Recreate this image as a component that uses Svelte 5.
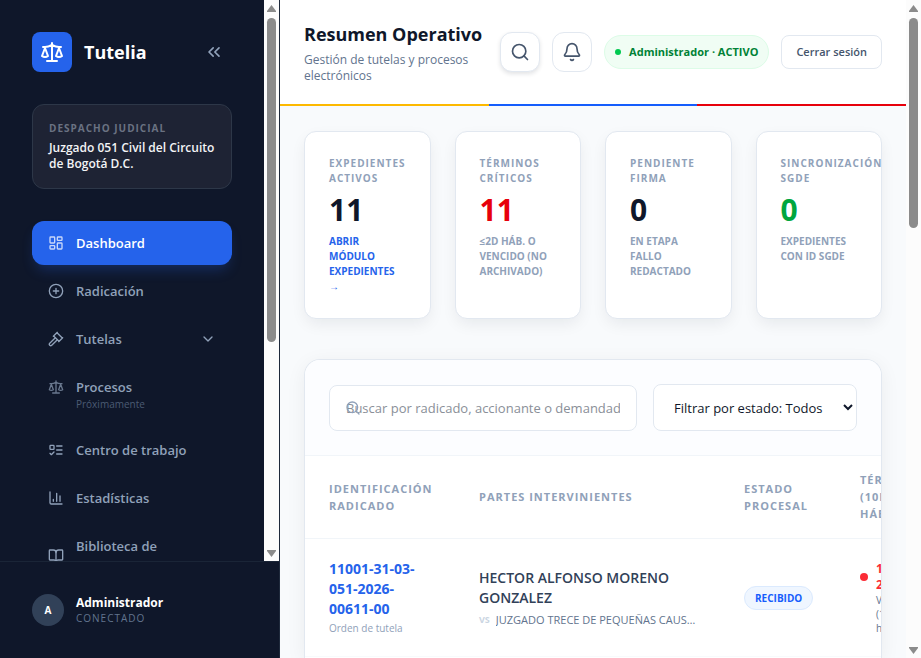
<script>
  let query = $state('')
  let status = $state('todos')

  const nav = [
    { label: 'Dashboard', icon: 'grid', active: true },
    { label: 'Radicación', icon: 'plus' },
    { label: 'Tutelas', icon: 'gavel', expandable: true },
    { label: 'Procesos', icon: 'scale', note: 'Próximamente' },
    { label: 'Centro de trabajo', icon: 'todo' },
    { label: 'Estadísticas', icon: 'chart' },
    { label: 'Biblioteca de', icon: 'book', tall: true }
  ]

  const stats = [
    { label: 'Expedientes activos', value: 11, link: 'Abrir módulo expedientes →' },
    { label: 'Términos críticos', value: 11, tone: 'red', note: '≤2d háb. o vencido (no archivado)' },
    { label: 'Pendiente firma', value: 0, note: 'En etapa fallo redactado' },
    { label: 'Sincronización SGDE', value: 0, tone: 'green', note: 'Expedientes con ID SGDE' }
  ]

  const cases = [
    {
      id: '11001-31-03-051-2026-00611-00',
      kind: 'Orden de tutela',
      claimant: 'HECTOR ALFONSO MORENO GONZALEZ',
      defendant: 'JUZGADO TRECE DE PEQUEÑAS CAUSAS',
      status: 'RECIBIDO',
      due: ['17 mar', '2026'],
      dueNote: ['Vencido', '(10 días', 'háb.)']
    }
  ]
</script>

{#snippet icon(name, size = 16)}
  <svg
    class="icon"
    width={size}
    height={size}
    viewBox="0 0 24 24"
    fill="none"
    stroke="currentColor"
    stroke-width="2"
    stroke-linecap="round"
    stroke-linejoin="round"
    aria-hidden="true"
  >
    {#if name === 'scale'}
      <path d="m16 16 3-8 3 8c-.87.65-1.92 1-3 1s-2.13-.35-3-1Z" />
      <path d="m2 16 3-8 3 8c-.87.65-1.92 1-3 1s-2.13-.35-3-1Z" />
      <path d="M7 21h10M12 3v18M3 7h2c2 0 5-1 7-2 2 1 5 2 7 2h2" />
    {:else if name === 'collapse'}
      <path d="m11 17-5-5 5-5M18 17l-5-5 5-5" />
    {:else if name === 'grid'}
      <rect width="7" height="9" x="3" y="3" rx="1" />
      <rect width="7" height="5" x="14" y="3" rx="1" />
      <rect width="7" height="9" x="14" y="12" rx="1" />
      <rect width="7" height="5" x="3" y="16" rx="1" />
    {:else if name === 'plus'}
      <circle cx="12" cy="12" r="10" />
      <path d="M8 12h8M12 8v8" />
    {:else if name === 'gavel'}
      <path d="m14 13-8.381 8.38a1 1 0 0 1-3.001-3l8.384-8.381" />
      <path d="m16 16 6-6M21.5 10.5l-8-8M8 8l6-6M8.5 7.5l8 8" />
    {:else if name === 'todo'}
      <rect x="3" y="5" width="6" height="6" rx="1" />
      <path d="m3 17 2 2 4-4M13 6h8M13 12h8M13 18h8" />
    {:else if name === 'chart'}
      <path d="M3 3v16a2 2 0 0 0 2 2h16M18 17V9M13 17V5M8 17v-3" />
    {:else if name === 'book'}
      <path d="M12 7v14" />
      <path
        d="M3 18a1 1 0 0 1-1-1V4a1 1 0 0 1 1-1h5a4 4 0 0 1 4 4 4 4 0 0 1 4-4h5a1 1 0 0 1 1 1v13a1 1 0 0 1-1 1h-6a3 3 0 0 0-3 3 3 3 0 0 0-3-3z"
      />
    {:else if name === 'chevron'}
      <path d="m6 9 6 6 6-6" />
    {:else if name === 'search'}
      <circle cx="11" cy="11" r="8" />
      <path d="m21 21-4.3-4.3" />
    {:else if name === 'bell'}
      <path d="M10.268 21a2 2 0 0 0 3.464 0" />
      <path
        d="M3.262 15.326A1 1 0 0 0 4 17h16a1 1 0 0 0 .74-1.673C19.41 13.956 18 12.499 18 8A6 6 0 0 0 6 8c0 4.499-1.411 5.956-2.738 7.326"
      />
    {/if}
  </svg>
{/snippet}

{#snippet scrollbar(thumb)}
  <div class="scrollbar" aria-hidden="true">
    <svg width="9" height="7" viewBox="0 0 9 7"><path d="M4.5 0 9 6v1H0V6z" /></svg>
    <div class="track"><div class="thumb" style="height: {thumb}%"></div></div>
    <svg width="9" height="7" viewBox="0 0 9 7"><path d="M4.5 7 9 1V0H0v1z" /></svg>
  </div>
{/snippet}

<div class="app">
  <aside class="sidebar">
    <div class="sidebar-scroll">
      <div class="sidebar-body">
        <div class="brand">
          <span class="logo">{@render icon('scale', 24)}</span>
          <span class="brand-name">Tutelia</span>
          <button class="collapse" aria-label="Contraer menú">{@render icon('collapse', 20)}</button>
        </div>

        <section class="office">
          <p class="office-label">Despacho judicial</p>
          <p class="office-name">Juzgado 051 Civil del Circuito de Bogotá D.C.</p>
        </section>

        <nav>
          {#each nav as item}
            <a href="#{item.icon}" class="nav-item" class:active={item.active} class:muted={item.note}>
              {@render icon(item.icon)}
              <span class="nav-label" class:tall={item.tall}>
                {item.label}
                {#if item.note}<small>{item.note}</small>{/if}
              </span>
              {#if item.expandable}{@render icon('chevron')}{/if}
            </a>
          {/each}
        </nav>
      </div>
      {@render scrollbar(61.6)}
    </div>

    <footer class="user">
      <span class="avatar">A</span>
      <div>
        <p class="user-name">Administrador</p>
        <p class="user-state">CONECTADO</p>
      </div>
    </footer>
  </aside>

  <div class="page">
    <header class="topbar">
      <div class="heading">
        <h1>Resumen Operativo</h1>
        <p>Gestión de tutelas y procesos electrónicos</p>
      </div>
      <button class="square raised" aria-label="Buscar">{@render icon('search', 20)}</button>
      <button class="square" aria-label="Notificaciones">{@render icon('bell', 20)}</button>
      <span class="session"><i class="dot"></i>Administrador · ACTIVO</span>
      <button class="logout">Cerrar sesión</button>
    </header>
    <div class="stripe"><i></i><i></i><i></i></div>

    <main>
      <section class="stats">
        {#each stats as stat}
          <article class="stat">
            <h2>{stat.label}</h2>
            <p class="value {stat.tone ?? ''}">{stat.value}</p>
            {#if stat.link}
              <a class="note" href="#expedientes">{stat.link}</a>
            {:else}
              <p class="note">{stat.note}</p>
            {/if}
          </article>
        {/each}
      </section>

      <section class="panel">
        <div class="filters">
          <div class="search">
            {@render icon('search')}
            <input
              type="text"
              aria-label="Buscar expedientes"
              placeholder="Buscar por radicado, accionante o demandado..."
              bind:value={query}
            />
          </div>
          <select aria-label="Filtrar por estado" bind:value={status}>
            <option value="todos">Filtrar por estado: Todos</option>
            <option value="recibido">Recibido</option>
          </select>
        </div>

        <table>
          <colgroup>
            <col class="col-id" />
            <col class="col-parties" />
            <col class="col-status" />
            <col class="col-due" />
          </colgroup>
          <thead>
            <tr>
              <th>Identificación radicado</th>
              <th>Partes intervinientes</th>
              <th>Estado procesal</th>
              <th>Término<br />(10D<br />hábiles)</th>
            </tr>
          </thead>
          <tbody>
            {#each cases as row}
              <tr>
                <td>
                  <a class="case-id" href="#{row.id}">{row.id}</a>
                  <p class="case-kind">{row.kind}</p>
                </td>
                <td>
                  <p class="claimant">{row.claimant}</p>
                  <p class="defendant"><b>VS</b><span>{row.defendant}</span></p>
                </td>
                <td><span class="badge">{row.status}</span></td>
                <td>
                  <div class="due">
                    <i class="dot"></i>
                    <span>{#each row.due as line}{line}<br />{/each}</span>
                  </div>
                  <p class="due-note">{#each row.dueNote as line}{line}<br />{/each}</p>
                </td>
              </tr>
            {/each}
          </tbody>
        </table>
      </section>
    </main>
  </div>

  {@render scrollbar(33.7)}
</div>

<style>
  :global(body) {
    margin: 0;
  }

  .app,
  .app * {
    box-sizing: border-box;
  }

  .app {
    display: flex;
    height: 100vh;
    overflow: hidden;
    background: #f8fafc;
    color: #0f172a;
    font-family: 'Open Sans', 'Noto Sans', sans-serif;
    font-size: 13px;
    line-height: 20px;
  }

  p,
  h1,
  h2 {
    margin: 0;
  }

  a {
    text-decoration: none;
  }

  button,
  input,
  select {
    font: inherit;
    color: inherit;
  }

  button {
    padding: 0;
    border: 0;
    background: none;
    cursor: pointer;
  }

  .icon {
    display: block;
    flex: none;
  }

  .dot {
    flex: none;
    width: 6px;
    height: 6px;
    border-radius: 50%;
    background: #00c950;
  }

  /* scrollbars */
  .scrollbar {
    flex: none;
    display: flex;
    flex-direction: column;
    align-items: center;
    gap: 6px;
    width: 15px;
    padding: 5px 0 4px;
    background: #fcfcfc;
    fill: #8b8b8b;
  }

  .track {
    flex: 1;
    width: 9px;
  }

  .thumb {
    border-radius: 5px;
    background: #8b8b8b;
  }

  /* sidebar */
  .sidebar {
    flex: none;
    display: flex;
    flex-direction: column;
    width: 280px;
    border-right: 1px solid #1e293b;
    background: #0f172a;
    color: #90a1b9;
  }

  .sidebar-scroll {
    flex: 1;
    display: flex;
    min-height: 0;
    overflow: hidden;
  }

  .sidebar-body {
    flex: 1;
    display: flex;
    flex-direction: column;
    gap: 32px;
    min-width: 0;
    padding: 32px;
  }

  .brand {
    display: flex;
    align-items: center;
    gap: 12px;
  }

  .logo {
    display: grid;
    place-items: center;
    width: 40px;
    height: 40px;
    border-radius: 8px;
    background: #2563eb;
    color: #fff;
  }

  .brand-name {
    flex: 1;
    color: #fff;
    font-size: 18px;
    font-weight: 700;
  }

  .collapse {
    display: grid;
    place-items: center;
    width: 36px;
    height: 36px;
  }

  .office {
    padding: 16px;
    border: 1px solid #2d3748;
    border-radius: 12px;
    background: #1e2334;
  }

  .office-label {
    margin-bottom: 4px;
    color: #6a7282;
    font-size: 10px;
    font-weight: 700;
    line-height: 15px;
    letter-spacing: 1px;
    text-transform: uppercase;
  }

  .office-name {
    color: #f3f4f6;
    font-size: 12px;
    font-weight: 600;
    line-height: 16px;
  }

  nav {
    display: flex;
    flex-direction: column;
    gap: 4px;
  }

  .nav-item {
    display: flex;
    align-items: center;
    gap: 12px;
    padding: 12px 16px;
    border-radius: 12px;
    color: inherit;
    font-weight: 600;
  }

  .nav-item.active {
    background: #2563eb;
    color: #fff;
    box-shadow: 0 8px 14px -4px rgba(37, 99, 235, 0.3);
  }

  .nav-item.active .icon {
    color: #c9d8fa;
  }

  .nav-item.muted {
    align-items: flex-start;
  }

  .nav-item.muted .icon {
    margin-top: 2px;
    opacity: 0.7;
  }

  .nav-label {
    flex: 1;
  }

  .nav-label.tall {
    min-height: 40px;
  }

  .nav-label small {
    display: block;
    color: #4b5b73;
    font-size: 10px;
    font-weight: 500;
    line-height: 15px;
  }

  .user {
    display: flex;
    align-items: center;
    gap: 12px;
    padding: 32px;
    border-top: 1px solid #1a2537;
  }

  .avatar {
    display: grid;
    place-items: center;
    width: 32px;
    height: 32px;
    border-radius: 50%;
    background: #314158;
    color: #fff;
    font-size: 10px;
    font-weight: 700;
  }

  .user-name {
    color: #fff;
    font-size: 12px;
    font-weight: 700;
    line-height: 16px;
  }

  .user-state {
    color: #62748e;
    font-size: 10px;
    line-height: 15px;
    letter-spacing: 1px;
  }

  /* page */
  .page {
    flex: 1;
    display: flex;
    flex-direction: column;
    min-width: 0;
  }

  .topbar {
    display: flex;
    align-items: center;
    gap: 12px;
    padding: 20px 24px;
    background: #fff;
  }

  .heading {
    flex: 1;
  }

  .heading h1 {
    margin-bottom: 4px;
    font-size: 18px;
    font-weight: 700;
    line-height: 28px;
    white-space: nowrap;
  }

  .heading p {
    color: #62748e;
    font-size: 12px;
    font-weight: 500;
    line-height: 16px;
  }

  .square {
    flex: none;
    display: grid;
    place-items: center;
    width: 40px;
    height: 40px;
    border: 1px solid #e2e8f0;
    border-radius: 12px;
    background: #fff;
    color: #45556c;
  }

  .square.raised {
    box-shadow: 0 2px 4px rgba(15, 23, 42, 0.12);
  }

  .session {
    flex: none;
    display: flex;
    align-items: center;
    gap: 8px;
    padding: 8px 10px;
    border: 1px solid #dcfce7;
    border-radius: 20px;
    background: #f0fdf4;
    color: #008236;
    font-size: 11px;
    font-weight: 700;
    line-height: 16px;
  }

  .logout {
    flex: none;
    padding: 8px 14px;
    border: 1px solid #e2e8f0;
    border-radius: 8px;
    background: #fff;
    color: #45556c;
    font-size: 11px;
    font-weight: 600;
    line-height: 16px;
  }

  .stripe {
    flex: none;
    display: flex;
    height: 2px;
  }

  .stripe i {
    flex: 1;
    background: #fdb900;
  }

  .stripe i:nth-child(2) {
    background: #155dfc;
  }

  .stripe i:nth-child(3) {
    background: #e7000b;
  }

  main {
    flex: 1;
    display: flex;
    flex-direction: column;
    gap: 40px;
    min-height: 0;
    padding: 25px 24px 0;
  }

  .stats {
    display: grid;
    grid-template-columns: repeat(4, minmax(0, 1fr));
    gap: 24px;
  }

  .stat {
    padding: 24px;
    border: 1px solid #e2e8f0;
    border-radius: 12px;
    background: #fff;
    box-shadow: 0 6px 16px -2px rgba(15, 23, 42, 0.08);
  }

  .stat h2,
  .note {
    color: #90a1b9;
    font-size: 10px;
    font-weight: 700;
    line-height: 15px;
    letter-spacing: 1px;
    text-transform: uppercase;
  }

  .note {
    display: block;
    letter-spacing: 0;
  }

  a.note {
    color: #2563eb;
  }

  .value {
    margin: 8px 0;
    font-size: 30px;
    font-weight: 700;
    line-height: 32px;
  }

  .value.red {
    color: #e7000b;
  }

  .value.green {
    color: #00a63e;
  }

  .panel {
    flex: 1 0 auto;
    overflow: hidden;
    border: 1px solid #e2e8f0;
    border-bottom: 0;
    border-radius: 16px 16px 0 0;
    background: #fff;
    box-shadow: 0 4px 20px rgba(15, 23, 42, 0.06);
  }

  .filters {
    display: flex;
    align-items: flex-end;
    gap: 16px;
    padding: 24px;
    border-bottom: 1px solid #f1f5f9;
    background: #fcfdff;
  }

  .search {
    position: relative;
    flex: 1;
  }

  .search .icon {
    position: absolute;
    top: 15px;
    left: 16px;
    color: #90a1b9;
  }

  .search input,
  select {
    display: block;
    width: 100%;
    height: 46px;
    padding: 0 16px;
    border: 1px solid #e2e8f0;
    border-radius: 8px;
    background: #fff;
  }

  .search input::placeholder {
    color: #8a8f98;
  }

  .filters select {
    flex: none;
    width: 204px;
    height: 47px;
    padding: 0 0 0 16px;
  }

  table {
    width: 900px;
    table-layout: fixed;
    border-collapse: collapse;
  }

  .col-id {
    width: 150px;
  }

  .col-parties {
    width: 265px;
  }

  .col-status {
    width: 116px;
  }

  th {
    padding: 15px 0 16px 24px;
    border-bottom: 1px solid #f1f5f9;
    color: #90a1b9;
    font-size: 11px;
    font-weight: 700;
    line-height: 17px;
    letter-spacing: 1px;
    text-align: left;
    text-transform: uppercase;
  }

  td {
    padding: 20px 24px;
    border-bottom: 1px solid #f8fafc;
  }

  .case-id {
    color: #2563eb;
    font-size: 14px;
    font-weight: 700;
  }

  .case-kind {
    margin-top: 2px;
    color: #90a1b9;
    font-size: 10px;
    font-weight: 500;
    line-height: 15px;
  }

  .claimant {
    color: #314158;
    font-size: 14px;
    font-weight: 600;
  }

  .defendant {
    display: flex;
    gap: 6px;
    margin-top: 4px;
    color: #62748e;
    font-size: 11px;
    font-weight: 500;
    line-height: 16px;
  }

  .defendant b {
    color: #cad5e2;
    font-size: 9px;
  }

  .defendant span {
    overflow: hidden;
    text-overflow: ellipsis;
    white-space: nowrap;
  }

  .badge {
    display: inline-block;
    padding: 4px 10px;
    border: 1px solid #dbeafe;
    border-radius: 12px;
    background: #eff6ff;
    color: #155dfc;
    font-size: 10px;
    font-weight: 700;
    line-height: 14px;
  }

  .due {
    display: flex;
    align-items: center;
    gap: 8px;
    color: #fb2c36;
    font-size: 12px;
    font-weight: 700;
    line-height: 16px;
  }

  .due .dot {
    width: 8px;
    height: 8px;
    background: #fb2c36;
  }

  .due-note {
    padding-left: 16px;
    color: #62748e;
    font-size: 10px;
    line-height: 14px;
  }
</style>
